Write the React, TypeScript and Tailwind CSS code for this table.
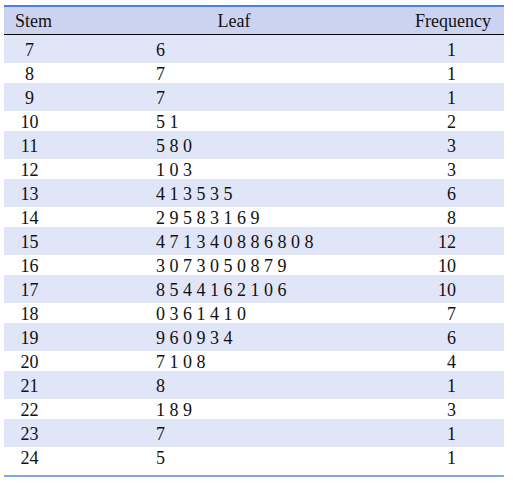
/*
 * Stem-and-leaf table with frequency column.
 */
const rows: [number, string, number][] = [
  [7, "6", 1],
  [8, "7", 1],
  [9, "7", 1],
  [10, "5 1", 2],
  [11, "5 8 0", 3],
  [12, "1 0 3", 3],
  [13, "4 1 3 5 3 5", 6],
  [14, "2 9 5 8 3 1 6 9", 8],
  [15, "4 7 1 3 4 0 8 8 6 8 0 8", 12],
  [16, "3 0 7 3 0 5 0 8 7 9", 10],
  [17, "8 5 4 4 1 6 2 1 0 6", 10],
  [18, "0 3 6 1 4 1 0", 7],
  [19, "9 6 0 9 3 4", 6],
  [20, "7 1 0 8", 4],
  [21, "8", 1],
  [22, "1 8 9", 3],
  [23, "7", 1],
  [24, "5", 1],
];

export default function App() {
  return (
    <div className="min-h-screen bg-white pt-[5px] px-[4px] w-[513px] font-['Liberation_Serif',serif] text-[18px] text-[#111]">
      <div className="w-[500px] border-t-2 border-[#4a7fe3]">
        {/* Header */}
        <div className="flex h-[28px] items-center pt-[2px] bg-[#ccd3f1] border-b border-black">
          <div className="w-[56px] pl-[11px]">Stem</div>
          <div className="w-[348px] text-center">Leaf</div>
          <div className="w-[96px] text-right pr-[13px]">Frequency</div>
        </div>

        {/* Body */}
        <div className="pb-[8px] border-b-2 border-[#7da6e6]">
          {rows.map(([stem, leaf, freq], i) => (
            <div
              key={stem}
              className={
                i % 2 === 0
                  ? "flex h-[28px] items-center pt-[2px] bg-[#e1e5f8]"
                  : "flex h-[20px] items-center pt-[2px]"
              }
            >
              <div className="w-[56px] text-center pr-[5px]">{stem}</div>
              <div className="w-[348px] pl-[96px] whitespace-pre">{leaf}</div>
              <div className="w-[96px] text-right pr-[48px]">{freq}</div>
            </div>
          ))}
        </div>
      </div>
    </div>
  );
}
